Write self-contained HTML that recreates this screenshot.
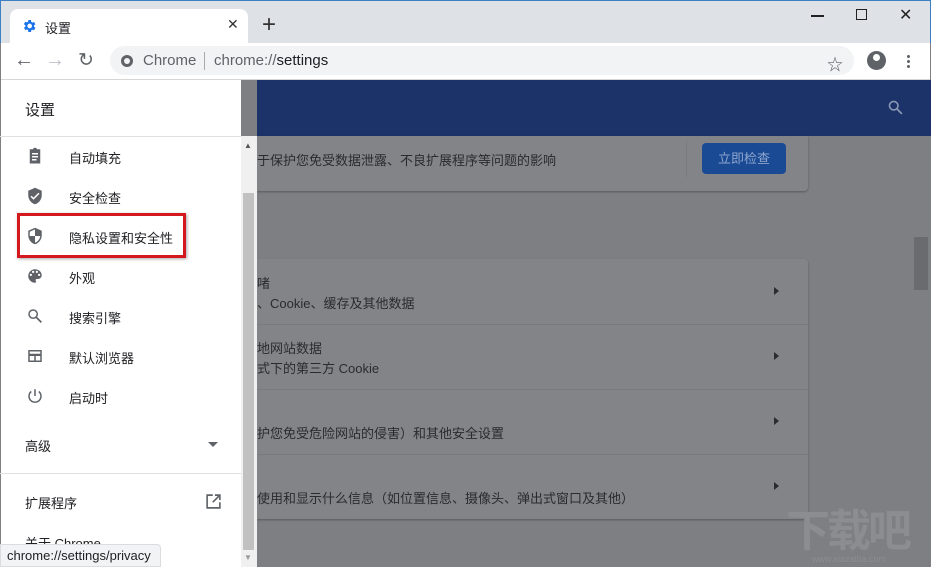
<!DOCTYPE html>
<html><head><meta charset="utf-8"><style>
*{margin:0;padding:0;box-sizing:border-box}
html,body{width:931px;height:567px;overflow:hidden}
body{position:relative;background:#7e7f82;font-family:"Liberation Sans","Noto Sans CJK SC",sans-serif;}
.abs{position:absolute}
.t{font-size:13px;color:#202124;white-space:nowrap}
.g{color:#2a2b2d}
</style></head><body>
<!-- title bar -->
<div class="abs" style="left:0;top:0;width:931px;height:43px;background:#dee1e6;border-top:1px solid #3c7fc4;border-left:1px solid #3c7fc4;border-right:1px solid #3c7fc4"></div>
<div class="abs" style="left:10px;top:9px;width:238px;height:35px;background:#fff;border-radius:8px 8px 0 0"></div>
<svg class="abs" style="left:21px;top:18px" width="16" height="16" viewBox="0 0 24 24"><path fill="#1a73e8" d="M19.4 13a7.5 7.5 0 000-2l2.1-1.6-2-3.5-2.5 1a7 7 0 00-1.7-1L15 3h-4l-.4 2.6a7 7 0 00-1.7 1l-2.5-1-2 3.5L6.6 11a7.5 7.5 0 000 2l-2.1 1.6 2 3.5 2.5-1a7 7 0 001.7 1L11 21h4l.4-2.6a7 7 0 001.7-1l2.5 1 2-3.5zM13 15.5a3.5 3.5 0 110-7 3.5 3.5 0 010 7z"/></svg>
<div class="abs t" style="left:45px;top:18px;font-size:13px">设置</div>
<div class="abs" style="left:227px;top:16px;font-size:14px;color:#333">✕</div>
<div class="abs" style="left:262px;top:11px;font-size:24px;color:#333;font-weight:300">+</div>
<div class="abs" style="left:811px;top:15px;width:13px;height:1.5px;background:#222"></div>
<div class="abs" style="left:856px;top:9px;width:11px;height:11px;border:1.5px solid #222"></div>
<div class="abs" style="left:899px;top:5px;font-size:16px;color:#222">✕</div>
<!-- toolbar -->
<div class="abs" style="left:1px;top:43px;width:929px;height:37px;background:#fff;border-bottom:1px solid #d6d6d6"></div>
<div class="abs" style="left:14px;top:49px;font-size:20px;color:#5f6368">←</div>
<div class="abs" style="left:45px;top:49px;font-size:20px;color:#bdc1c6">→</div>
<div class="abs" style="left:78px;top:49px;font-size:19px;color:#5f6368">↻</div>
<div class="abs" style="left:110px;top:46px;width:744px;height:29px;background:#f1f3f4;border-radius:15px"></div>
<div class="abs" style="left:121px;top:55px;width:12px;height:12px;border-radius:50%;background:#5f6368"><div style="margin:3px;width:6px;height:6px;border-radius:50%;background:#f1f3f4"></div></div>
<div class="abs" style="left:143px;top:52px;font-size:15px;color:#5f6368">Chrome</div>
<div class="abs" style="left:204px;top:52px;width:1px;height:18px;background:#aaa"></div>
<div class="abs" style="left:214px;top:52px;font-size:15px;color:#5f6368">chrome://<span style="color:#202124">settings</span></div>
<div class="abs" style="left:827px;top:51px;font-size:16px;color:#5f6368">☆</div>
<div class="abs" style="left:867px;top:51px;width:19px;height:19px;border-radius:50%;background:#5f6368"></div>
<div class="abs" style="left:873px;top:54px;width:7px;height:7px;border-radius:50%;background:#fff"></div>
<div class="abs" style="left:907px;top:55px;width:3px;height:3px;border-radius:50%;background:#5f6368;box-shadow:0 5px 0 #5f6368,0 10px 0 #5f6368"></div>
<!-- header -->
<div class="abs" style="left:257px;top:80px;width:674px;height:56px;background:#1b3369"></div>
<svg class="abs" style="left:887px;top:99px" width="17" height="17" viewBox="0 0 24 24"><circle cx="9.5" cy="9.5" r="6" fill="none" stroke="#8a97b4" stroke-width="2.3"/><path d="M14 14l7 7" stroke="#8a97b4" stroke-width="2.5"/></svg>
<!-- content -->
<div class="abs" style="left:257px;top:136px;width:551px;height:55px;background:#838487;border-radius:0 0 4px 0;box-shadow:0 1px 2px rgba(0,0,0,.3)"></div>
<div class="abs t g" style="left:257px;top:150px;font-size:13px">于保护您免受数据泄露、不良扩展程序等问题的影响</div>
<div class="abs" style="left:686px;top:141px;width:1px;height:36px;background:#787a7d"></div>
<div class="abs" style="left:702px;top:143px;width:84px;height:31px;background:#1a4a94;border-radius:4px;color:#8ea5cc;font-size:13px;text-align:center;line-height:31px">立即检查</div>
<div class="abs" style="left:257px;top:259px;width:551px;height:260px;background:#838487;border-radius:0 4px 4px 0;box-shadow:0 1px 2px rgba(0,0,0,.3)"></div>
<div class="abs" style="left:257px;top:324px;width:551px;height:1px;background:#797a7d"></div>
<div class="abs" style="left:257px;top:389px;width:551px;height:1px;background:#797a7d"></div>
<div class="abs" style="left:257px;top:454px;width:551px;height:1px;background:#797a7d"></div>
<div class="abs t g" style="left:257px;top:273px">啫</div>
<div class="abs t g" style="left:257px;top:293px">、Cookie、缓存及其他数据</div>
<div class="abs t g" style="left:257px;top:338px">地网站数据</div>
<div class="abs t g" style="left:257px;top:358px">式下的第三方 Cookie</div>
<div class="abs t g" style="left:257px;top:423px">护您免受危险网站的侵害）和其他安全设置</div>
<div class="abs t g" style="left:257px;top:488px">使用和显示什么信息（如位置信息、摄像头、弹出式窗口及其他）</div>
<div class="abs" style="left:774px;top:287px;border-left:5px solid #2a2b2d;border-top:4px solid transparent;border-bottom:4px solid transparent"></div>
<div class="abs" style="left:774px;top:352px;border-left:5px solid #2a2b2d;border-top:4px solid transparent;border-bottom:4px solid transparent"></div>
<div class="abs" style="left:774px;top:417px;border-left:5px solid #2a2b2d;border-top:4px solid transparent;border-bottom:4px solid transparent"></div>
<div class="abs" style="left:774px;top:482px;border-left:5px solid #2a2b2d;border-top:4px solid transparent;border-bottom:4px solid transparent"></div>
<!-- right scrollbar -->
<div class="abs" style="left:914px;top:237px;width:14px;height:53px;background:#6a6b6e"></div>
<div class="abs" style="left:786px;top:508px;font-size:44px;line-height:48px;color:#8c8d90;font-weight:bold;letter-spacing:-3px">下载吧</div>
<div class="abs" style="left:812px;top:554px;font-size:9px;color:#8c8d90">www.xiazaiba.com</div>
<!-- sidebar -->
<div class="abs" style="left:1px;top:80px;width:240px;height:487px;background:#fff"></div>
<div class="abs t" style="left:25px;top:99px;font-size:15px">设置</div>
<div class="abs" style="left:0;top:136px;width:241px;height:1px;background:#e0e0e0"></div>
<div class="abs" style="left:241px;top:136px;width:16px;height:431px;background:#f0f0f0"></div>
<div class="abs" style="left:243px;top:193px;width:11px;height:357px;background:#c1c1c1"></div>
<div class="abs" style="left:244px;top:141px;font-size:8px;color:#555">▲</div>
<div class="abs" style="left:244px;top:553px;font-size:8px;color:#999">▼</div>
<svg class="abs" style="left:26px;top:147px" width="18" height="18" viewBox="0 0 24 24"><path fill="#5f6368" d="M19 3h-4.2a3 3 0 00-5.6 0H5v19h14zM8 8h8v2H8zm0 4h8v2H8zm0 4h6v2H8z"/></svg>
<div class="abs t" style="left:69px;top:148px">自动填充</div>
<svg class="abs" style="left:26px;top:187px" width="18" height="18" viewBox="0 0 24 24"><path fill="#5f6368" d="M12 1L3 5v6c0 5.5 3.8 10.7 9 12 5.2-1.3 9-6.5 9-12V5zm-2 16l-4-4 1.4-1.4L10 14.2l6.6-6.6L18 9z"/></svg>
<div class="abs t" style="left:69px;top:188px">安全检查</div>
<svg class="abs" style="left:26px;top:227px" width="18" height="18" viewBox="0 0 24 24"><path fill="#5f6368" d="M12 1L3 5v6c0 5.5 3.8 10.7 9 12 5.2-1.3 9-6.5 9-12V5zm0 11H5V6.3l7-3.1zm0 0h7c-.5 4.1-3.3 7.8-7 8.9z"/></svg>
<div class="abs t" style="left:69px;top:228px">隐私设置和安全性</div>
<div class="abs" style="left:17px;top:213px;width:169px;height:45px;border:3px solid #d3181e;box-shadow:1px 1px 3px rgba(0,0,0,.35)"></div>
<svg class="abs" style="left:26px;top:267px" width="18" height="18" viewBox="0 0 24 24"><path fill="#5f6368" d="M12 3a9 9 0 000 18c.8 0 1.5-.7 1.5-1.5 0-.4-.2-.7-.4-1-.2-.3-.4-.6-.4-1 0-.8.7-1.5 1.5-1.5H16a5 5 0 005-5c0-4.4-4-8-9-8zM6.5 12a1.5 1.5 0 110-3 1.5 1.5 0 010 3zm3-4a1.5 1.5 0 110-3 1.5 1.5 0 010 3zm5 0a1.5 1.5 0 110-3 1.5 1.5 0 010 3zm3 4a1.5 1.5 0 110-3 1.5 1.5 0 010 3z"/></svg>
<div class="abs t" style="left:69px;top:268px">外观</div>
<svg class="abs" style="left:26px;top:307px" width="18" height="18" viewBox="0 0 24 24"><circle cx="9.5" cy="9.5" r="5.5" fill="none" stroke="#5f6368" stroke-width="2"/><path d="M13.5 13.5l7 7" stroke="#5f6368" stroke-width="2.2"/></svg>
<div class="abs t" style="left:69px;top:308px">搜索引擎</div>
<svg class="abs" style="left:26px;top:347px" width="18" height="18" viewBox="0 0 24 24"><path fill="#5f6368" d="M3 4h18v16H3zm2 5v9h6v-6H5V9h14V6H5zm8 3v6h6v-6z"/></svg>
<div class="abs t" style="left:69px;top:348px">默认浏览器</div>
<svg class="abs" style="left:26px;top:387px" width="18" height="18" viewBox="0 0 24 24"><path d="M12 3v9M7 6a8 8 0 1010 0" fill="none" stroke="#5f6368" stroke-width="2"/></svg>
<div class="abs t" style="left:69px;top:388px">启动时</div>
<div class="abs t" style="left:25px;top:436px">高级</div>
<div class="abs" style="left:208px;top:442px;border-top:5px solid #5f6368;border-left:5px solid transparent;border-right:5px solid transparent"></div>
<div class="abs" style="left:0;top:473px;width:241px;height:1px;background:#e0e0e0"></div>
<div class="abs t" style="left:25px;top:493px">扩展程序</div>
<svg class="abs" style="left:205px;top:493px" width="17" height="17" viewBox="0 0 24 24"><path d="M11 3H3v18h18v-8M14 3h7v7M21 3L11 13" fill="none" stroke="#5f6368" stroke-width="2.3"/></svg>
<div class="abs t" style="left:25px;top:533px">关于 Chrome</div>
<div class="abs" style="left:0;top:544px;width:161px;height:23px;background:#f1f3f4;border-radius:0 4px 0 0;border:1px solid #dadce0;font-size:13px;color:#202124;padding:3px 0 0 6px">chrome://settings/privacy</div>
</body></html>
